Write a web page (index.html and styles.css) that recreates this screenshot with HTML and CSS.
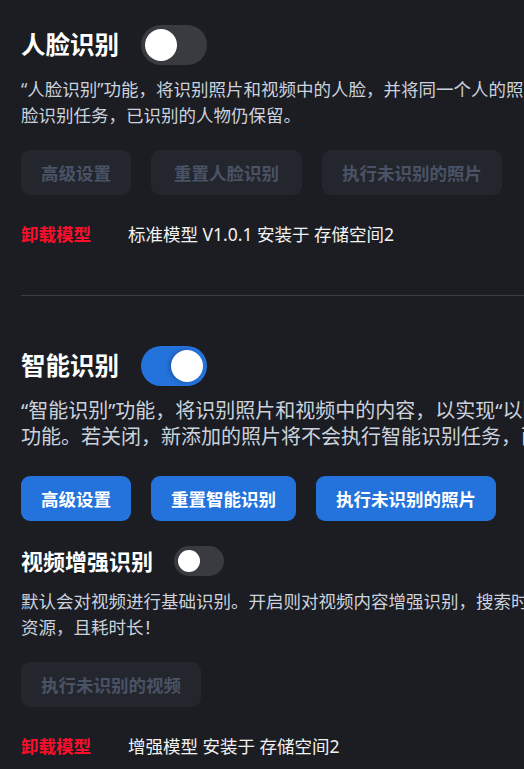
FILE: index.html
```html
<!DOCTYPE html>
<html lang="zh-CN">

<head>
    <meta charset="UTF-8" />
    <meta name="viewport" content="width=device-width, initial-scale=1.0" />
    <title>识别设置</title>
    <link rel="stylesheet" href="styles.css">
</head>

<body>
    <div class="page">
        <section class="block">
            <div class="block-head">
                <h2 class="block-title">人脸识别</h2>
                <span class="switch"><span class="knob"></span></span>
            </div>
            <p class="desc">“人脸识别”功能，将识别照片和视频中的人脸，并将同一个人的照片归类到一起。若关闭，新添加的照片将不会执行人<br>脸识别任务，已识别的人物仍保留。</p>
            <div class="actions">
                <button class="btn" disabled>高级设置</button>
                <button class="btn btn-wide" disabled>重置人脸识别</button>
                <button class="btn" disabled>执行未识别的照片</button>
            </div>
            <div class="model-row">
                <span class="model-remove">卸载模型</span>
                <span class="model-info">标准模型 V1.0.1 安装于 存储空间2</span>
            </div>
        </section>

        <hr class="divider">

        <section class="block block-second">
            <div class="block-head">
                <h2 class="block-title">智能识别</h2>
                <span class="switch on"><span class="knob"></span></span>
            </div>
            <p class="desc desc-large">“智能识别”功能，将识别照片和视频中的内容，以实现“以图搜图”、“文字搜图”等智能搜索<br>功能。若关闭，新添加的照片将不会执行智能识别任务，而已识别的内容仍保留。</p>
            <div class="actions actions-loose">
                <button class="btn btn-primary">高级设置</button>
                <button class="btn btn-primary">重置智能识别</button>
                <button class="btn btn-primary">执行未识别的照片</button>
            </div>

            <div class="block-head sub-head">
                <h3 class="sub-title">视频增强识别</h3>
                <span class="switch small"><span class="knob"></span></span>
            </div>
            <p class="desc">默认会对视频进行基础识别。开启则对视频内容增强识别，搜索时可按视频内容精准查找，但会占用较多系统<br>资源，且耗时长！</p>
            <div class="actions">
                <button class="btn" disabled>执行未识别的视频</button>
            </div>
            <div class="model-row">
                <span class="model-remove">卸载模型</span>
                <span class="model-info">增强模型 安装于 存储空间2</span>
            </div>
        </section>
    </div>
</body>

</html>
```

FILE: styles.css
```css
html,
body {
    margin: 0;
    background-color: #1b1d22;
    overflow: hidden;
}

body {
    font-family: "Noto Sans", "Noto Sans CJK SC", sans-serif;
    color: #fff;
}

.page {
    padding: 25px 21px 0;
    width: 1000px;
}

.block-head {
    display: flex;
    align-items: center;
    gap: 22px;
    height: 40px;
}

.block-title {
    margin: 0;
    font-size: 24.5px;
    font-weight: bold;
    line-height: 40px;
    color: #fff;
}

.sub-head {
    margin-top: 25px;
    height: 30px;
    gap: 21px;
}

.sub-title {
    margin: 0;
    font-size: 22px;
    font-weight: bold;
    line-height: 30px;
}

.switch {
    position: relative;
    display: inline-block;
    width: 66px;
    height: 40px;
    border-radius: 20px;
    background-color: #393b41;
}

.switch .knob {
    position: absolute;
    top: 4px;
    left: 4px;
    width: 32px;
    height: 32px;
    border-radius: 50%;
    background-color: #fff;
}

.switch.on {
    background-color: #2473dc;
}

.switch.on .knob {
    left: auto;
    right: 4px;
    box-shadow: -2px 0 4px rgba(0, 0, 0, 0.25);
}

.switch.small {
    width: 50px;
    height: 30px;
    border-radius: 15px;
}

.switch.small .knob {
    top: 4px;
    width: 22px;
    height: 22px;
}

.desc {
    margin: 11px 0 0;
    font-size: 17.5px;
    line-height: 26px;
    color: #cbd2dd;
    white-space: nowrap;
}

.desc-large {
    font-size: 20px;
}

.actions {
    display: flex;
    gap: 20px;
    margin-top: 22px;
}

.actions-loose {
    margin-top: 26px;
}

.btn {
    height: 45px;
    padding: 0 20px;
    border: none;
    border-radius: 9px;
    font-family: inherit;
    font-size: 17.5px;
    font-weight: bold;
    background-color: #23262d;
    color: #4a5365;
    cursor: pointer;
}

.btn-wide {
    padding: 0 23px;
}

.btn-primary {
    background-color: #2473dc;
    color: #fff;
}

.model-row {
    display: flex;
    align-items: center;
    margin-top: 26px;
    font-size: 17.5px;
    line-height: 26px;
}

.model-remove {
    width: 107px;
    font-weight: bold;
    color: #fa0f2b;
}

.model-info {
    color: #f2f2f2;
}

.divider {
    margin: 48px 0 0;
    border: none;
    border-top: 1px solid #3a3d44;
}

.block-second {
    margin-top: 50px;
}

.block-second .desc {
    margin-top: 12px;
}
```
